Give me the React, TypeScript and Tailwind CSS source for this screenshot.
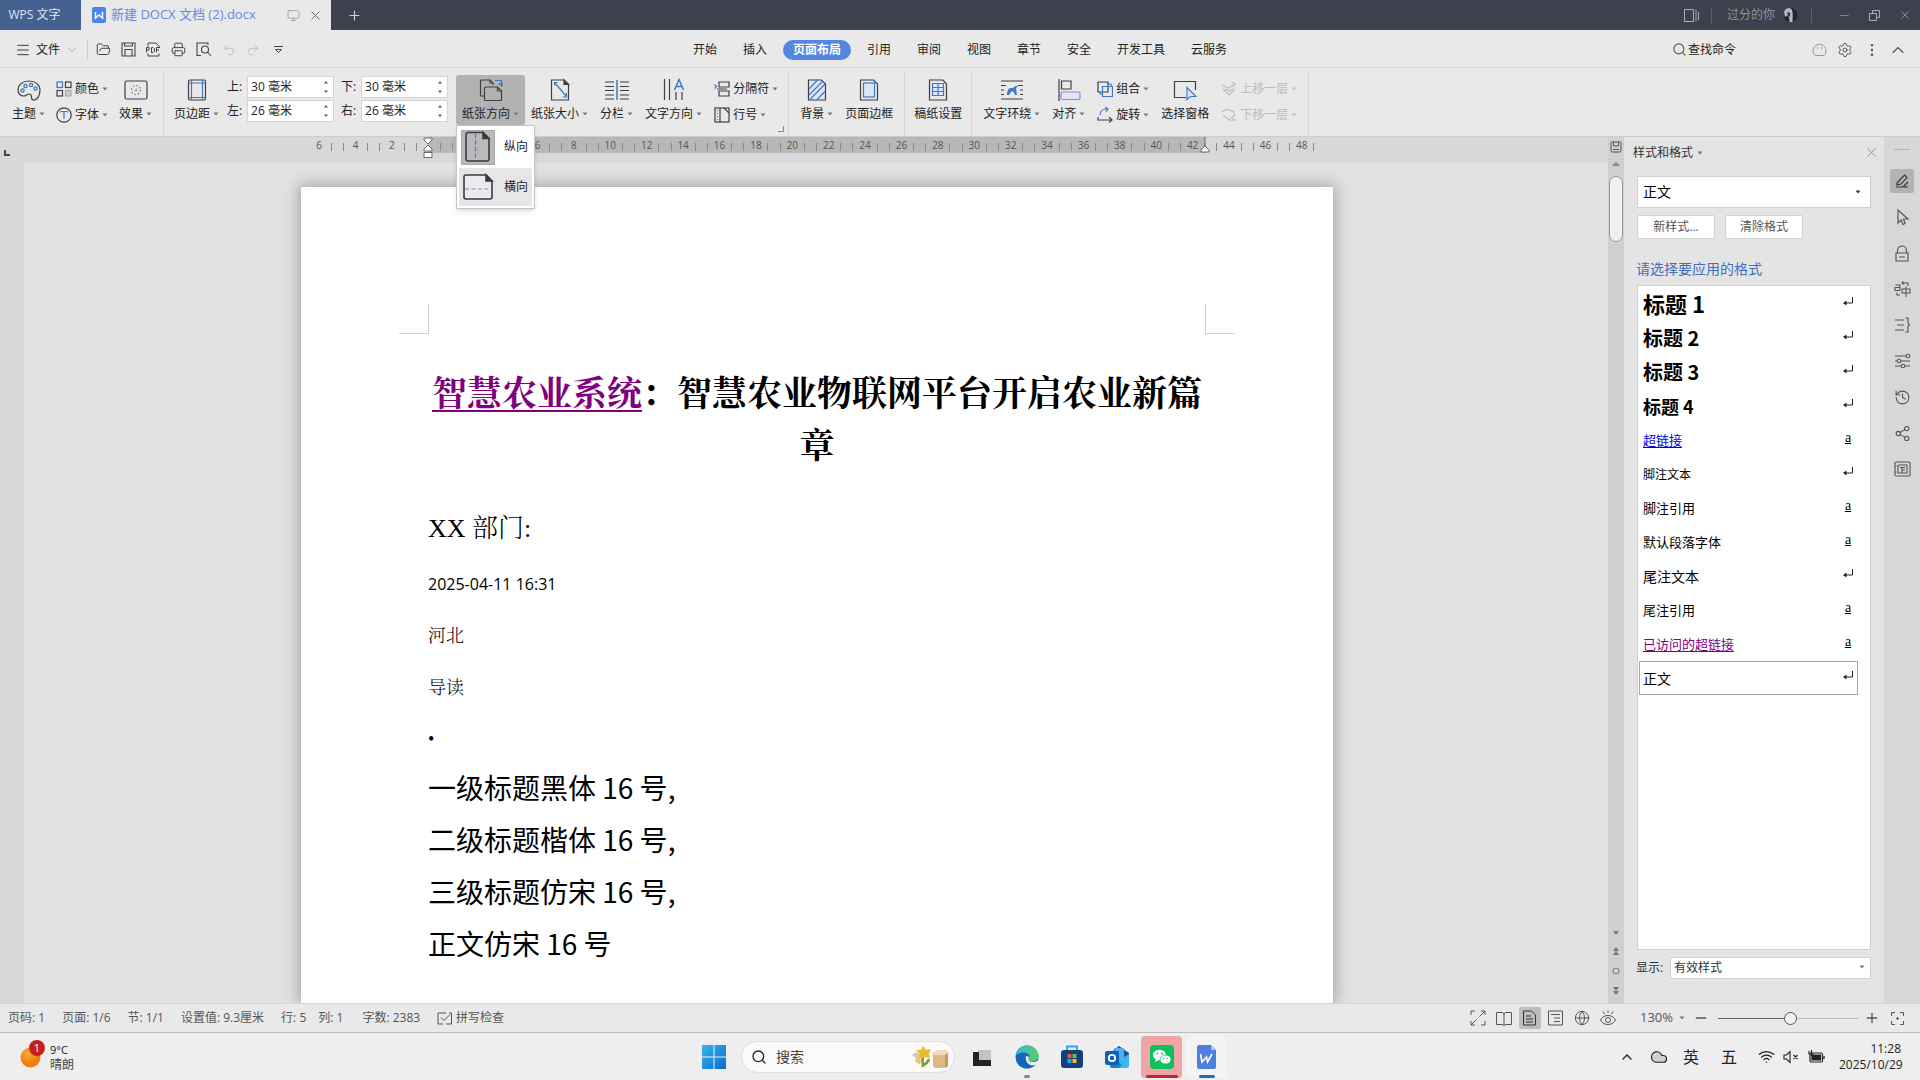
import React from "react";
import {
  FolderOpen, Printer, Undo2, Redo2, Search, Settings, EllipsisVertical,
  ChevronUp, ChevronDown, X, Minus, Plus, Menu, History, Share2,
  Globe, Wifi, Cloud, Monitor,
} from "lucide-react";

const UI = "font-['Open_Sans','Noto_Sans_CJK_SC',sans-serif]";
const SONG = "font-['Liberation_Serif','Noto_Serif_CJK_SC','Noto_Sans_CJK_SC',serif]";

type Kids = { children: React.ReactNode };

function Caret({ className = "text-[#777]" }: { className?: string }) {
  return (
    <svg width="6" height="4" viewBox="0 0 6 4" className={`shrink-0 ${className}`} aria-hidden="true">
      <path d="M0.5 0.5h5L3 3.5z" fill="currentColor" />
    </svg>
  );
}

function Svg({ size = 24, children }: Kids & { size?: number }) {
  return (
    <svg width={size} height={size} viewBox={`0 0 ${size} ${size}`} fill="none" stroke="#3f3f46" strokeWidth="1.2" className="shrink-0" aria-hidden="true">
      {children}
    </svg>
  );
}

const BLUE = "#3f78c4";

const PaletteIcon = () => (
  <Svg>
    <path d="M12 3C5.500 3 1 7 1 12c0 4 3 6 5.500 6 3 0 3-2 5.500-2 2 0 2.500 1.500 2.500 3 0 1.500 0 3 2 3 4 0 6.500-5 6.500-10C23 7 18.500 3 12 3z" />
    <g stroke={BLUE} strokeWidth="1.300"><circle cx="5.500" cy="12.500" r="1.600" /><circle cx="8.500" cy="8" r="1.600" /><circle cx="14" cy="7" r="1.600" /><circle cx="18.500" cy="10.500" r="1.600" /></g>
  </Svg>
);
const ColorsIcon = () => (
  <Svg size={16}>
    <rect x="1" y="1" width="5.500" height="5.500" stroke={BLUE} /><rect x="9.500" y="1" width="5.500" height="5.500" />
    <rect x="1" y="9.500" width="5.500" height="5.500" /><rect x="9.500" y="9.500" width="5.500" height="5.500" stroke="#aaa" fill="#ccc" />
  </Svg>
);
const FontIcon = () => (
  <Svg size={16}><circle cx="8" cy="8" r="7.200" /><path d="M4.500 5.500V4.500h7v1M8 4.500V12" stroke={BLUE} /></Svg>
);
const EffectIcon = () => (
  <Svg><rect x="1" y="3" width="22" height="18" rx="1.500" /><circle cx="12" cy="12" r="4.500" stroke="#777" strokeDasharray="1.500 2" /><circle cx="12" cy="12" r="1" stroke="#777" strokeDasharray="1 1" /></Svg>
);
const MarginIcon = () => (
  <Svg><rect x="3.500" y="2" width="17" height="20" rx="1.500" /><path d="M6.500 2v20M17.500 2v20M3.500 5h17M3.500 19.500h17" stroke={BLUE} /></Svg>
);
const OrientIcon = () => (
  <Svg>
    <path d="M5 18H2.500a1 1 0 0 1-1-1V3a1 1 0 0 1 1-1H11l3 3v2" /><path d="M11 2v3h3" />
    <path d="M6.500 9h12l4 4v8.500a1 1 0 0 1-1 1h-15a1 1 0 0 1-1-1V10a1 1 0 0 1 1-1z" /><path d="M18.500 9v4h4" />
    <path d="M16 2.500h6.500V8M20 5l2.500 3 1-3" stroke={BLUE} />
  </Svg>
);
const SizeIcon = () => (
  <Svg><path d="M4 2h12l4.500 4.500V22H3.500V2z" /><path d="M16 2v4.500h4.500z" fill="#3f3f46" /><path d="M6.500 7.500v-3h3M6.500 4.500l12 14M18.500 15v4h-4" stroke={BLUE} /></Svg>
);
const ColumnsIcon = () => (
  <Svg><path d="M0 4h9M0 8.500h9M0 12.500h9M0 17h9M0 21h9M15 4h9M15 8.500h9M15 12.500h9M15 17h9M15 21h9" /><path d="M12 2v20" stroke={BLUE} strokeWidth="1.500" /></Svg>
);
const TextDirIcon = () => (
  <Svg><path d="M2.500 1v21M7.500 1v21M14 14v8M20 14v8" /><path d="M12.500 12L17 1.500 21.500 12M14 8.500h6" stroke={BLUE} strokeWidth="1.500" /></Svg>
);
const BreakIcon = () => (
  <Svg size={16}><path d="M5 1h10v5H5zM15 10H5v5h10zM3 8h10" /><path d="M0.500 3.500L2.500 5.500 0.500 7.500" stroke={BLUE} /></Svg>
);
const LineNoIcon = () => (
  <Svg size={16}><rect x="1" y="1" width="14" height="14" /><path d="M6 1v14M10 1l5 5" /><path d="M3.500 3v1M3.500 6v1M3.500 9v1M3.500 12v1" stroke={BLUE} /></Svg>
);
const BgIcon = () => (
  <Svg><path d="M4 2h12.500L20.500 6v16H3.500V2z" fill="#dbe8f7" /><path d="M4 11l8.500-9M4 17L18 3M5 21.500L20 6M12 21.500l8-8" stroke={BLUE} /></Svg>
);
const BorderIcon = () => (
  <Svg><path d="M4 2h12.500L20.500 6v16H3.500V2z" /><rect x="6.500" y="5" width="11" height="14" stroke={BLUE} fill="#dbe8f7" /></Svg>
);
const GridPaperIcon = () => (
  <Svg><path d="M4 2h13l3.500 4v16H3.500V2z" /><path d="M6.500 5.500h11v12h-11zM6.500 9.500h11M6.500 13.500h11M12 5.500v12" stroke={BLUE} fill="#dbe8f7" /></Svg>
);
const WrapIcon = () => (
  <Svg><path d="M1 3h22M1 21h22M1 7.500h5M18 7.500h5M1 12h3M20 12h3M1 16.500h3M20 16.500h3" /><path d="M7 17c0-4 1-6 3-7h3c1-1 3-3 5-2l-2 2 1 7h-2l-2-4-2 1-2 3z" fill={BLUE} stroke="none" /></Svg>
);
const AlignIcon = () => (
  <Svg><path d="M2 1v22M4.500 3H14v8H4.500z" /><rect x="4" y="14" width="19" height="7.500" rx="1.500" stroke="#8f86d8" fill="#dfe8f8" /></Svg>
);
const GroupIcon = () => (
  <Svg size={16}><path d="M1 1h10v10H1z" /><path d="M5.500 5.500h10v10h-10z" stroke={BLUE} /><path d="M11 3h3v3M5 13H3v-2" stroke={BLUE} /></Svg>
);
const RotateIcon = () => (
  <Svg size={16}><path d="M1 10v3h14M12 10l3 3-3 2.500" /><path d="M3 8c0-4 3-6 7-6M8 0l3 2-2 3" stroke={BLUE} /></Svg>
);
const PaneIcon = () => (
  <Svg><path d="M13 19.500H1.500v-16h21V12" /><path d="M14 9.500v12l3.500-3H23z" stroke={BLUE} fill="#dbe8f7" /></Svg>
);
const LayerIcon = ({ down = false }: { down?: boolean }) => (
  <svg width="16" height="16" viewBox="0 0 16 16" fill="none" stroke="#bdbdbd" strokeWidth="1.200" className="shrink-0" aria-hidden="true">
    {down ? <path d="M1 5l5-3 7 3v3M2 8l6 5 6-5M10 14l3-2 2 2" /> : <path d="M1 4l6 3 5-3M2 8l6 6 6-6M11 1l3 2-2 3M4 8l4 2 4-2" />}
  </svg>
);

function Big({ icon, label, caret = true }: { icon: React.ReactNode; label: string; caret?: boolean }) {
  return (
    <button className="flex flex-col items-center gap-1 text-xs leading-4 whitespace-nowrap">
      {icon}
      <span className="flex items-center gap-[3px]">{label}{caret && <Caret />}</span>
    </button>
  );
}
function Small({ icon, label, disabled = false }: { icon: React.ReactNode; label: string; disabled?: boolean }) {
  return (
    <button disabled={disabled} className="flex h-[22px] items-center gap-[3px] text-xs whitespace-nowrap disabled:text-[#bcbcbc]">
      {icon}{label}<Caret className={disabled ? "text-[#c4c4c4]" : "text-[#777]"} />
    </button>
  );
}
function Pair({ children }: Kids) {
  return <div className="flex flex-col gap-1">{children}</div>;
}
function Group({ children, pad = "px-[11px]" }: Kids & { pad?: string }) {
  return <div className={`relative flex items-start gap-3 border-r border-[#d9d9d9] pt-1.5 ${pad}`}>{children}</div>;
}
function Spin({ id, label, value }: { id: string; label: string; value: string }) {
  return (
    <div className="flex h-[22px] items-center gap-1 text-xs">
      <label htmlFor={id} className="w-4 whitespace-nowrap">{label}:</label>
      <span className="flex h-full w-[87px] items-center border border-[#d4d4d4] bg-white pr-1">
        <input id={id} defaultValue={value} className="w-full min-w-0 bg-transparent pl-[3px] outline-none" />
        <svg width="6" height="14" viewBox="0 0 6 14" fill="#555" className="shrink-0" aria-hidden="true"><path d="M1 3.500h4L3 1zM1 10.500h4L3 13z" /></svg>
      </span>
    </div>
  );
}

function TitleBar() {
  return (
    <header className="flex h-[30px] shrink-0 items-stretch bg-[#3d404d] text-[#a9adb8]">
      <button className="w-[81px] bg-[#45618f] pr-3 text-xs text-[#dfe6f2]">WPS 文字</button>
      <div className="flex w-[250px] items-center bg-[#e9e9e9] pr-2 pl-[11px]">
        <svg width="14" height="16" viewBox="0 0 14 16" aria-hidden="true"><rect width="14" height="16" rx="2" fill="#4a86ee" /><path d="M3.500 5v6l3.500-3 3.500 3V5" stroke="#fff" strokeWidth="1.500" fill="none" /></svg>
        <span className="ml-[5px] flex-1 text-[13px] text-[#5f8ce0]">新建 DOCX 文档 (2).docx</span>
        <Monitor size={13} strokeWidth={1.200} className="text-[#888]" />
        <button aria-label="关闭标签" className="ml-2 text-[#666]"><X size={15} strokeWidth={1.400} /></button>
      </div>
      <button aria-label="新建标签" className="px-4 text-[#d0d2d8]"><Plus size={15} strokeWidth={1.800} /></button>
      <div className="ml-auto flex items-center pr-2 text-xs">
        <svg width="15" height="13" viewBox="0 0 15 13" fill="none" stroke="currentColor" aria-hidden="true"><path d="M.5.5h9v12h-9zM12 .5v12M14.500 3v8" /></svg>
        <span className="ml-3 h-4 w-px bg-[#5c5f6b]" />
        <button className="ml-[15px] text-[#8f939f]">过分的你</button>
        <svg width="15" height="16" viewBox="0 0 15 16" className="ml-2" aria-hidden="true"><circle cx="7.500" cy="8" r="7" fill="#23252e" /><path d="M1 5c1-3 3-4 5-4 4 0 4 5 3.500 14H6.500c0-4-1-5-1.500-7L2 10z" fill="#b4b8c0" /><path d="M4 5l3 1v4L5 8z" fill="#23252e" /></svg>
        <span className="ml-[13px] h-4 w-px bg-[#5c5f6b]" />
        <button aria-label="最小化" className="ml-[26px]"><Minus size={13} strokeWidth={1.200} /></button>
        <button aria-label="还原" className="ml-[18px]"><svg width="11" height="11" viewBox="0 0 11 11" fill="none" stroke="currentColor" aria-hidden="true"><path d="M.5 3.500h7v7h-7zM3.500 3.500v-3h7v7h-3" /></svg></button>
        <button aria-label="关闭" className="ml-[18px]"><X size={14} strokeWidth={1.200} /></button>
      </div>
    </header>
  );
}

const TABS = ["开始", "插入", "页面布局", "引用", "审阅", "视图", "章节", "安全", "开发工具", "云服务"];

function MenuRow() {
  return (
    <div className="grid h-[38px] shrink-0 grid-cols-[1fr_auto_1fr] items-center border-b border-[#dcdcdc] bg-[#e9e9e9] pt-0.5 text-xs">
      <div className="flex items-center pl-[15px] text-[#444]">
        <button className="flex items-center gap-[5px] text-[#222]"><Menu size={16} strokeWidth={1.300} />文件<ChevronDown size={14} strokeWidth={1.200} className="text-[#999]" /></button>
        <span className="mx-2 h-5 w-px bg-[#cfcfcf]" />
        <div className="flex items-center gap-[10px] [&_svg]:block">
          <button aria-label="打开"><FolderOpen size={15} strokeWidth={1.600} /></button>
          <button aria-label="保存">
            <svg width="15" height="15" viewBox="0 0 15 15" fill="none" stroke="currentColor" strokeWidth="1.100" aria-hidden="true"><path d="M1 1h13v13H1zM3.500 1v3h8V1M4 14V7.500h7V14" /></svg>
          </button>
          <button aria-label="输出为PDF">
            <svg width="15" height="15" viewBox="0 0 15 15" fill="none" stroke="currentColor" aria-hidden="true"><path d="M2 4.500V1h8l3 3v1M2 11.500V14h11v-2.500M.5 5.500v5M.5 5.500h2.500v2.500H.5M5.500 5.500v5h1.500l1.500-1.500v-2L7 5.500zM10.500 10.500v-5H14M10.500 8H13" /></svg>
          </button>
          <button aria-label="打印"><Printer size={15} strokeWidth={1.600} /></button>
          <button aria-label="打印预览">
            <svg width="16" height="15" viewBox="0 0 16 15" fill="none" stroke="currentColor" strokeWidth="1.100" aria-hidden="true"><path d="M5 13.500H1V1h11v2" /><circle cx="9" cy="7.500" r="3.500" /><path d="M11.500 10l3.500 4" /></svg>
          </button>
          <button aria-label="撤销" className="text-[#bbb]"><Undo2 size={14} strokeWidth={1.600} /></button>
          <button aria-label="恢复" className="text-[#bbb]"><Redo2 size={14} strokeWidth={1.600} /></button>
          <button aria-label="自定义" className="pl-1"><svg width="9" height="9" viewBox="0 0 9 9" fill="none" stroke="currentColor" aria-hidden="true"><path d="M0 1.500h9M1.500 4.500l3 3 3-3z" /></svg></button>
        </div>
      </div>
      <nav className="flex gap-1.5 text-[#222]">
        {TABS.map((t) =>
          t === "页面布局" ? (
            <button key={t} className="h-5 rounded-full bg-[#5387e0] px-[10px] font-bold text-white">{t}</button>
          ) : (
            <button key={t} className="h-5 px-[10px]">{t}</button>
          )
        )}
      </nav>
      <div className="flex items-center pr-3 text-[#555]">
        <button className="mr-[76px] ml-auto flex items-center gap-px text-[#222]"><Search size={15} strokeWidth={1.800} className="text-[#555]" />查找命令</button>
        <button aria-label="反馈" className="text-[#999]"><svg width="15" height="15" viewBox="0 0 15 15" fill="none" stroke="currentColor" aria-hidden="true"><path d="M3 13.500a6.500 6.500 0 1 1 9 0zM5.500 5v2M9.500 5v2" /></svg></button>
        <button aria-label="设置" className="ml-[10px]"><Settings size={16} strokeWidth={1.500} /></button>
        <button aria-label="更多" className="ml-[11px]"><EllipsisVertical size={16} strokeWidth={1.800} /></button>
        <button aria-label="收起功能区" className="ml-2"><ChevronUp size={20} strokeWidth={1.400} /></button>
      </div>
    </div>
  );
}

function OrientationMenu() {
  return (
    <div role="menu" className="absolute top-full left-0 z-20 flex w-[79px] flex-col gap-0.5 border border-[#c4c4c4] bg-white p-0.5 text-xs shadow-md">
      <button role="menuitem" className="flex h-[38px] items-center gap-[9px] pl-0.5">
        <span className="flex h-[35px] w-[34px] items-center justify-center border border-[#a9a9a9] bg-[#b9b9bb]">
          <svg width="28" height="32" viewBox="0 0 28 32" fill="none" stroke="#3a3a3f" strokeWidth="1.600" aria-hidden="true"><path d="M4 1.500h15l6 6V28a2 2 0 0 1-2 2H4a2 2 0 0 1-2-2V3.500a2 2 0 0 1 2-2z" /><path d="M19 1.500v6h6z" fill="#3a3a3f" /><path d="M11.500 3v26" stroke="#5b6fc0" strokeWidth="1.200" strokeDasharray="4 2.500" /></svg>
        </span>
        纵向
      </button>
      <button role="menuitem" className="flex h-[38px] items-center gap-[9px] bg-[#e6e6e8] pl-0.5">
        <span className="flex h-[35px] w-[34px] items-center justify-center">
          <svg width="32" height="28" viewBox="0 0 32 28" fill="none" stroke="#3a3a3f" strokeWidth="1.600" aria-hidden="true"><path d="M4 2h20l6 6v16a2 2 0 0 1-2 2H4a2 2 0 0 1-2-2V4a2 2 0 0 1 2-2z" fill="#eaeaf0" /><path d="M24 2v6h6z" fill="#3a3a3f" /><path d="M3 16h26" stroke="#8a8ea8" strokeWidth="1.200" strokeDasharray="4 2.500" /></svg>
        </span>
        横向
      </button>
    </div>
  );
}

function Ribbon() {
  return (
    <div className="flex h-[69px] shrink-0 items-stretch border-b border-[#cdcdcd] bg-[#e9e9e9] pt-1 text-[#222]">
      <div className="relative flex items-start gap-[11px] border-r border-[#d9d9d9] pt-1.5 pr-[11px] pl-3">
        <Big icon={<PaletteIcon />} label="主题" />
        <Pair><Small icon={<ColorsIcon />} label="颜色" /><Small icon={<FontIcon />} label="字体" /></Pair>
        <Big icon={<EffectIcon />} label="效果" />
      </div>
      <Group pad="pl-[10px] pr-[10px]">
        <Big icon={<MarginIcon />} label="页边距" />
        <div className="-mt-0.5 -ml-1 grid grid-cols-2 gap-x-[7px] gap-y-0.5">
          <Spin id="m-top" label="上" value="30 毫米" /><Spin id="m-bottom" label="下" value="30 毫米" />
          <Spin id="m-left" label="左" value="26 毫米" /><Spin id="m-right" label="右" value="26 毫米" />
        </div>
        <div className="relative -my-[3px] -mr-1.5 -ml-1 rounded-[3px] bg-[#b2b2b2] px-1.5 py-[3px]">
          <Big icon={<OrientIcon />} label="纸张方向" />
          <OrientationMenu />
        </div>
        <Big icon={<SizeIcon />} label="纸张大小" />
        <Big icon={<ColumnsIcon />} label="分栏" />
        <Big icon={<TextDirIcon />} label="文字方向" />
        <Pair><Small icon={<BreakIcon />} label="分隔符" /><Small icon={<LineNoIcon />} label="行号" /></Pair>
        <button aria-label="页面设置" className="absolute right-1 bottom-1"><svg width="6" height="6" viewBox="0 0 6 6" fill="none" stroke="#888" aria-hidden="true"><path d="M5.500 0v5.500H0" /></svg></button>
      </Group>
      <Group><Big icon={<BgIcon />} label="背景" /><Big icon={<BorderIcon />} label="页面边框" caret={false} /></Group>
      <Group pad="px-[9px]"><Big icon={<GridPaperIcon />} label="稿纸设置" caret={false} /></Group>
      <Group>
        <Big icon={<WrapIcon />} label="文字环绕" />
        <Big icon={<AlignIcon />} label="对齐" />
        <Pair><Small icon={<GroupIcon />} label="组合" /><Small icon={<RotateIcon />} label="旋转" /></Pair>
        <Big icon={<PaneIcon />} label="选择窗格" caret={false} />
        <Pair><Small disabled icon={<LayerIcon />} label="上移一层" /><Small disabled icon={<LayerIcon down />} label="下移一层" /></Pair>
      </Group>
    </div>
  );
}

const RULER = Array.from({ length: 28 }, (_, i) => i * 2 - 6);

function Ruler() {
  return (
    <div className="flex h-[25px] shrink-0 bg-[#d8d8d8]">
      <div className="w-6 pt-[13px] pl-1"><svg width="6" height="6" viewBox="0 0 6 6" fill="none" stroke="#444" strokeWidth="2" aria-hidden="true"><path d="M1 0v5h5" /></svg></div>
      <div className="flex flex-1 justify-center pl-0.5">
        <div className="relative w-[1032px]">
          <div className="absolute top-0 left-[127px] h-4 w-[777px] bg-[#b8b8b8]" />
          <div className="relative grid w-[1019px] grid-cols-[repeat(28,minmax(0,1fr))] text-[10px] leading-4 text-[#555]">
            {RULER.map((n) => (
              <div key={n} className="flex h-4 items-center justify-evenly">
                <span className={n === -6 ? "w-px" : "mt-1 h-2 w-px bg-[#8b8b8b]"} />
                <span className="w-3 text-center">{n === 0 ? "" : Math.abs(n)}</span>
                <span className="mt-1 h-2 w-px bg-[#8b8b8b]" />
              </div>
            ))}
          </div>
          <svg width="10" height="22" viewBox="0 0 10 22" fill="#fff" stroke="#666" className="absolute top-0 left-[122px]" aria-hidden="true"><path d="M1 1h8v2L5 7 1 3zM5 8l4 4v2H1v-2zM1 15.500h8v5H1z" /></svg>
          <svg width="10" height="18" viewBox="0 0 10 18" fill="#fff" stroke="#666" className="absolute top-0 left-[899px]" aria-hidden="true"><path d="M5 0v10M5 9l4 4v2H1v-2z" /></svg>
        </div>
      </div>
    </div>
  );
}

function Document() {
  return (
    <article className={`h-full w-[1032px] shrink-0 overflow-hidden bg-white pt-[117px] text-black shadow-[0_0_14px_2px_rgba(0,0,0,0.28)] ${SONG}`}>
      <div className="flex justify-between px-[98px]">
        <span className="size-[30px] border-r border-b border-[#d0d0d0]" />
        <span className="size-[30px] border-b border-l border-[#d0d0d0]" />
      </div>
      <div className="px-[127px]">
        <h1 className="mt-[31px] text-center text-[35px] leading-[52px] font-bold font-['Noto_Serif_CJK_SC','Noto_Sans_CJK_SC',serif]">
          <a href="#system" className="text-[#800080] underline decoration-2 underline-offset-4">智慧农业系统</a>：智慧农业物联网平台开启农业新篇章
        </h1>
        <p className="mt-[34px] text-[26px] leading-[52px] font-light">XX 部门:</p>
        <p className="mt-[3px] text-base leading-[52px] font-['Open_Sans',sans-serif]">2025-04-11 16:31</p>
        <p className="text-[18px] leading-[52px] font-light">河北</p>
        <p className="text-[18px] leading-[52px] font-light">导读</p>
        <p className="h-[47px] text-[18px] leading-[50px]">•</p>
        <div className="text-[28px] leading-[52px] font-['Noto_Sans_CJK_SC',sans-serif]">
          <p>一级标题黑体 16 号,</p>
          <p>二级标题楷体 16 号,</p>
          <p>三级标题仿宋 16 号,</p>
          <p>正文仿宋 16 号</p>
        </div>
      </div>
    </article>
  );
}

function ScrollBar() {
  return (
    <div className="flex w-4 flex-col items-center bg-[#d0d0d0] pt-1">
      <svg width="12" height="12" viewBox="0 0 12 12" fill="none" stroke="#555" aria-hidden="true"><rect x="1" y="1" width="10" height="10" rx="1" /><path d="M3.500 1v4h5V1M3 8.500h6" /></svg>
      <svg width="8" height="5" viewBox="0 0 8 5" fill="#888" className="mt-2" aria-hidden="true"><path d="M0 5h8L4 1z" /></svg>
      <span className="mt-[10px] h-[66px] w-3.5 rounded-full border border-[#999] bg-[#f0f0f0]" />
      <div className="mt-auto flex flex-col items-center gap-3 pb-2">
        <svg width="6" height="4" viewBox="0 0 6 4" fill="#777" aria-hidden="true"><path d="M0 0h6L3 4z" /></svg>
        <svg width="6" height="8" viewBox="0 0 6 8" fill="#777" aria-hidden="true"><path d="M0 4h6L3 0zM0 8h6L3 4z" /></svg>
        <svg width="8" height="8" viewBox="0 0 8 8" fill="none" stroke="#777" aria-hidden="true"><circle cx="4" cy="4" r="3" /></svg>
        <svg width="6" height="8" viewBox="0 0 6 8" fill="#777" aria-hidden="true"><path d="M0 0h6L3 4zM0 4h6L3 8z" /></svg>
      </div>
    </div>
  );
}

const STYLES: { name: string; cls: string; para: boolean }[] = [
  { name: "标题 1", cls: "text-[22px] font-bold", para: true },
  { name: "标题 2", cls: "text-[20px] font-bold", para: true },
  { name: "标题 3", cls: "text-[20px] font-bold", para: true },
  { name: "标题 4", cls: "text-[18px] font-bold", para: true },
  { name: "超链接", cls: "text-[13px] text-[#0000e0] underline underline-offset-2", para: false },
  { name: "脚注文本", cls: "text-xs", para: true },
  { name: "脚注引用", cls: "text-[13px]", para: false },
  { name: "默认段落字体", cls: "text-[13px]", para: false },
  { name: "尾注文本", cls: "text-sm", para: true },
  { name: "尾注引用", cls: "text-[13px]", para: false },
  { name: "已访问的超链接", cls: "text-[13px] text-[#800080] underline underline-offset-2", para: false },
  { name: "正文", cls: "text-sm", para: true },
];

function StylePanel() {
  return (
    <aside className="flex w-[260px] flex-col bg-[#e4e4e4] px-[13px] pb-6 text-xs text-[#333]">
      <div className="-ml-1 flex h-[31px] items-center">
        <h2 className="flex items-center gap-1">样式和格式<Caret /></h2>
        <button aria-label="关闭窗格" className="-mr-2 ml-auto text-[#888]"><X size={15} strokeWidth={1.400} /></button>
      </div>
      <div className="relative mt-2">
        <select aria-label="当前样式" className="h-8 w-full appearance-none border border-[#d0d0d0] bg-white pl-[5px] text-sm text-black"><option>正文</option></select>
        <span className="pointer-events-none absolute top-3 right-2.5 flex h-2 items-center"><Caret className="text-[#333]" /></span>
      </div>
      <div className="mt-[7px] flex gap-[10px]">
        <button className="h-6 w-[78px] rounded-xs border border-[#d0d0d0] bg-white text-[#555]">新样式...</button>
        <button className="h-6 w-[78px] rounded-xs border border-[#d0d0d0] bg-white text-[#555]">清除格式</button>
      </div>
      <h3 className="mt-5 -ml-px text-sm leading-5 text-[#3f6fbf]">请选择要应用的格式</h3>
      <ul className="mt-1.5 flex-1 border border-[#d0d0d0] bg-white pt-px pr-3 pl-px text-black">
        {STYLES.map((s) => (
          <li key={s.name}>
            <button className={`flex h-[34px] w-full items-center justify-between border pr-1 pl-[3px] font-['Noto_Sans_CJK_SC',sans-serif] ${s.name === "正文" ? "border-[#a6a6b0]" : "border-transparent"}`}>
              <span className={s.cls}>{s.name}</span>
              {s.para ? (
                <svg width="10" height="9" viewBox="0 0 10 9" fill="none" stroke="#222" className="mb-1.5" aria-hidden="true"><path d="M9.500 0v6H2" /><path d="M0 6l3.500-2.500v5z" fill="#222" stroke="none" /></svg>
              ) : (
                <span className="mb-1 w-2.5 text-center text-sm leading-4 underline font-['Liberation_Serif',serif]">a</span>
              )}
            </button>
          </li>
        ))}
      </ul>
      <div className="mt-[7px] flex items-center gap-1">
        <label htmlFor="show" className="-ml-px w-[30px] whitespace-nowrap">显示:</label>
        <div className="relative flex-1">
          <select id="show" className="h-[22px] w-full appearance-none border border-[#d0d0d0] bg-white pl-[3px] text-xs"><option>有效样式</option></select>
          <span className="pointer-events-none absolute top-1.5 right-1.5 flex h-2 items-center"><Caret /></span>
        </div>
      </div>
    </aside>
  );
}

function SideBar() {
  return (
    <div className="flex w-9 flex-col items-center bg-[#d7d7d7] pt-3 text-[#555]">
      <span className="h-px w-4 bg-[#b5b5b5]" />
      <div className="mt-[19px] flex flex-col gap-3 *:flex *:size-6 *:items-center *:justify-center *:rounded-xs">
        <button aria-label="样式" className="bg-[#b3b3b3] text-[#333]"><svg width="16" height="16" viewBox="0 0 16 16" fill="none" stroke="currentColor" strokeWidth="1.100" aria-hidden="true"><path d="M3 10l7.500-8L13 4.500 7 11l-4 1zM2 14h7M9 14l5-5M10 14h4" /></svg></button>
        <button aria-label="选择"><svg width="13" height="17" viewBox="0 0 13 17" fill="none" stroke="currentColor" strokeWidth="1.200" aria-hidden="true"><path d="M2 1v13l3-3 2 4.500 2-1L7.500 10H12z" /></svg></button>
        <button aria-label="限制编辑"><svg width="14" height="17" viewBox="0 0 14 17" fill="none" stroke="currentColor" strokeWidth="1.200" aria-hidden="true"><path d="M2.500 8V5.500a4.500 4.500 0 0 1 9 0V8M1 8h12v8H1zM4 12h6" /></svg></button>
        <button aria-label="翻译"><svg width="17" height="17" viewBox="0 0 17 17" fill="none" stroke="currentColor" strokeWidth="1.100" aria-hidden="true"><path d="M1.500 4H6v5.500M6 6.500H1v3h5M8 8h8v4H8zM12 5.500V16M8 2h6v3M9.500 .5L8 2l1.500 1.500M3 11.500v2.500h3" /></svg></button>
        <button aria-label="目录"><svg width="16" height="16" viewBox="0 0 16 16" fill="none" stroke="currentColor" strokeWidth="1.100" aria-hidden="true"><path d="M1 3h9M3 8h7M1 13h9M11.500 1H14v5.500L15.500 8 14 9.500V15h-2.500" /></svg></button>
        <button aria-label="属性"><svg width="17" height="16" viewBox="0 0 17 16" fill="none" stroke="currentColor" strokeWidth="1.100" aria-hidden="true"><path d="M1 3h11M1 8h2M7 8h9M1 13h6M11 13h5" /><circle cx="14" cy="3" r="1.800" /><circle cx="5" cy="8" r="1.800" /><circle cx="9" cy="13" r="1.800" /></svg></button>
        <button aria-label="历史版本"><History size={17} strokeWidth={1.500} /></button>
        <button aria-label="分享"><Share2 size={17} strokeWidth={1.500} /></button>
        <button aria-label="稻壳"><svg width="17" height="16" viewBox="0 0 17 16" fill="none" stroke="currentColor" strokeWidth="1.100" aria-hidden="true"><rect x="1" y="1" width="15" height="14" rx="1" /><path d="M4 4h9v8H8M4 4v8h4M6 6.500h5M8 9h3M8 11.500V6.500M1 5h1.500M1 11h1.500" /></svg></button>
      </div>
    </div>
  );
}

function StatusBar() {
  return (
    <footer className="flex h-[29px] shrink-0 items-center border-t border-[#d5d5d5] bg-[#e9e9e9] pr-4 pl-2 text-xs text-[#555]">
      <div className="flex items-center gap-[17px] whitespace-nowrap">
        <span>页码: 1</span><span>页面: 1/6</span><span>节: 1/1</span><span>设置值: 9.3厘米</span>
        <span className="flex gap-3"><span>行: 5</span><span>列: 1</span></span>
        <span className="ml-0.5">字数: 2383</span>
        <button className="flex items-center gap-1"><svg width="15" height="13" viewBox="0 0 15 13" fill="none" stroke="currentColor" aria-hidden="true"><path d="M9 1H1v11h5M12 1h2.500v11H9M4 5.500l3 3 6-6" /></svg>拼写检查</button>
      </div>
      <div className="ml-auto flex items-center gap-1 *:flex *:size-[22px] *:items-center *:justify-center *:rounded-xs">
        <button aria-label="全屏"><svg width="16" height="16" viewBox="0 0 16 16" fill="none" stroke="currentColor" aria-hidden="true"><path d="M1 5V1h4M15 11v4h-4M1 11v4h4M11 1h4v4M9.500 6.500L15 1M6.500 9.500L1 15" /></svg></button>
        <button aria-label="阅读版式"><svg width="16" height="15" viewBox="0 0 16 15" fill="none" stroke="currentColor" aria-hidden="true"><path d="M.5 1.500H6l2 1 2-1h5.500v12H10l-2 1-2-1H.500zM8 2.500v12" /></svg></button>
        <button aria-label="页面视图" className="bg-[#bdbdbd] text-[#333]"><svg width="15" height="16" viewBox="0 0 15 16" fill="none" stroke="currentColor" aria-hidden="true"><path d="M1.500 1h8l4 4v10h-12zM4 6h5M4 9h7M4 12h7" /></svg></button>
        <button aria-label="大纲"><svg width="15" height="16" viewBox="0 0 15 16" fill="none" stroke="currentColor" aria-hidden="true"><path d="M.5 1h14v14H.500zM3 4.500h9M6 8h6M6 11.500h6" /></svg></button>
        <button aria-label="Web版式"><Globe size={16} strokeWidth={1.500} /></button>
        <button aria-label="护眼模式"><svg width="16" height="16" viewBox="0 0 16 16" fill="none" stroke="currentColor" aria-hidden="true"><path d="M.5 10c2-3.500 5-4.500 7.500-4.500s5.500 1 7.500 4.500c-2 3.500-5 4.500-7.500 4.500S2.500 13.500.5 10zM8 .5V3M3 1.500L4.500 4M13 1.500L11.500 4" /><circle cx="8" cy="10" r="2.500" /></svg></button>
      </div>
      <button className="ml-[21px] flex items-center gap-1.5 text-[13px]">130%<Caret /></button>
      <button aria-label="缩小" className="ml-2"><Minus size={16} strokeWidth={2} /></button>
      <input type="range" aria-label="缩放" min={0} max={100} defaultValue={52} className="mr-1.5 ml-[9px] h-[14px] w-[140px] appearance-none bg-transparent [&::-webkit-slider-runnable-track]:h-px [&::-webkit-slider-runnable-track]:bg-linear-to-r [&::-webkit-slider-runnable-track]:from-[#666] [&::-webkit-slider-runnable-track]:from-50% [&::-webkit-slider-runnable-track]:to-[#bbb] [&::-webkit-slider-runnable-track]:to-50% [&::-webkit-slider-thumb]:-mt-1.5 [&::-webkit-slider-thumb]:size-[13px] [&::-webkit-slider-thumb]:appearance-none [&::-webkit-slider-thumb]:rounded-full [&::-webkit-slider-thumb]:border [&::-webkit-slider-thumb]:border-[#555] [&::-webkit-slider-thumb]:bg-[#f2f2f2]" />
      <button aria-label="放大"><Plus size={16} strokeWidth={2} /></button>
      <button aria-label="适合窗口" className="ml-[11px]"><svg width="13" height="13" viewBox="0 0 13 13" fill="none" stroke="currentColor" aria-hidden="true"><path d="M.5 4V.5H4M9 .5h3.500V4M12.500 9v3.500H9M4 12.500H.500V9M6.500 5v3M5 6.500h3" /></svg></button>
    </footer>
  );
}

function TaskBar() {
  return (
    <div className="grid h-12 shrink-0 grid-cols-[1fr_auto_1fr] items-center border-t border-[#bdbdbd] bg-[#eeeeee] text-xs text-[#222]">
      <button className="flex items-center gap-1 pl-5 text-left">
        <svg width="26" height="30" viewBox="0 0 26 30" className="mb-1" aria-hidden="true">
          <defs><radialGradient id="sun" cx=".4" cy=".3"><stop offset="0" stopColor="#f9b233" /><stop offset="1" stopColor="#ee7d16" /></radialGradient></defs>
          <circle cx="10.500" cy="17.500" r="10" fill="url(#sun)" /><circle cx="17" cy="8" r="8" fill="#c42020" />
          <text x="17" y="12" fontSize="11" fill="#fff" textAnchor="middle" fontFamily="Open Sans">1</text>
        </svg>
        <span className="flex flex-col leading-[15px]"><span className="text-[11px]">9°C</span><span className="text-[#444]">晴朗</span></span>
      </button>
      <div className="flex items-center pl-[9px]">
        <button aria-label="开始菜单"><svg width="24" height="24" viewBox="0 0 24 24" aria-hidden="true"><defs><linearGradient id="win" x2="1" y2="1"><stop offset="0" stopColor="#38b5ee" /><stop offset="1" stopColor="#0a6cc9" /></linearGradient></defs><path d="M0 0h11.500v11.500H0zM12.500 0H24v11.500H12.500zM0 12.500h11.500V24H0zM12.500 12.500H24V24H12.500z" fill="url(#win)" /></svg></button>
        <label className="ml-[15px] flex h-8 w-[214px] items-center rounded-full border border-[#dedede] bg-[#fafafa] pr-[5px] pl-[9px]">
          <Search size={16} strokeWidth={2} className="shrink-0" />
          <input aria-label="搜索" placeholder="搜索" className="ml-[9px] w-full min-w-0 bg-transparent text-sm outline-none placeholder:text-[#444]" />
          <svg width="40" height="24" viewBox="0 0 40 24" className="shrink-0" aria-hidden="true">
            <path d="M3 10c3-4 8-3 9 1l-3 4z" fill="#cfcabb" /><path d="M14 22c-1-6-1-8 0-12M14 20c3-1 5-3 6-6" stroke="#7a9a2e" strokeWidth="2.500" fill="none" />
            <path d="M14 1l3 4 5-1-2 5 1 4-6-1-5 2 1-5-4-4 5 0z" fill="#edb92e" /><path d="M7 12l5 3-1 5-5-4z" fill="#e8c76a" />
            <path d="M24 8l5-3h8l2 3v13l-3 2H26l-2-2z" fill="#dfb884" /><path d="M24 8l5-3h8l2 3-3 2H26z" fill="#f1dcb8" /><path d="M36 10l3-2v13l-3 2z" fill="#c99a60" />
          </svg>
        </label>
        <div className="ml-1.5 flex items-center gap-1 *:relative *:flex *:h-[42px] *:w-[41px] *:items-center *:justify-center *:rounded">
          <button aria-label="任务视图"><svg width="18" height="18" viewBox="0 0 18 18" aria-hidden="true"><path d="M5 2h13v10H5z" fill="#c4c4c4" /><path d="M0 4h6v8h12v6H0z" fill="#222" /></svg></button>
          <button aria-label="Edge">
            <svg width="24" height="24" viewBox="0 0 24 24" aria-hidden="true"><defs><linearGradient id="e1" x1="0" y1=".3" x2="1" y2=".3"><stop offset="0" stopColor="#2fb4e6" /><stop offset="1" stopColor="#5fd05c" /></linearGradient></defs><circle cx="12" cy="12" r="11.500" fill="#1466b8" /><path d="M.7 11C1 5 6 .5 12 .5c6.500 0 11.500 5 11.500 10 0 4-3 6-6 6s-4-1-4-2 1.500-1.500 1-3.500C14 8.500 11 7 8 7.500 4.500 7.700 1.500 9 .7 11z" fill="url(#e1)" /><path d="M14.500 12c-2 1.500-1.500 5 3.500 5 2 0 3.500-.5 4.500-1.500l1.500 3-2.500 1c-6 3-12-2-10.500-8.500z" fill="#eee" /></svg>
            <span className="absolute bottom-0 h-[3px] w-1.5 rounded-full bg-[#8a8a8a]" />
          </button>
          <button aria-label="Microsoft Store"><svg width="24" height="24" viewBox="0 0 24 24" aria-hidden="true"><path d="M7 5V1.500h10V5" stroke="#2aa5e0" strokeWidth="1.800" fill="none" /><rect x="1" y="5" width="22" height="18" rx="3" fill="#123f80" /><path d="M7.500 9h4v4h-4z" fill="#f05a28" /><path d="M12.500 9h4v4h-4z" fill="#7fba2a" /><path d="M7.500 14h4v4h-4z" fill="#2aa5ee" /><path d="M12.500 14h4v4h-4z" fill="#fdbb20" /></svg></button>
          <button aria-label="Outlook"><svg width="24" height="24" viewBox="0 0 24 24" aria-hidden="true"><path d="M5 8l9-7 10 7v13H5z" fill="#1a4f9c" /><path d="M9 3h10v10l-5 3-5-3z" fill="#4fb0ee" /><path d="M5 21l19-12v12a2 2 0 0 1-2 2H7z" fill="#3cb4f0" /><path d="M5 12l12 8-3 3H7a2 2 0 0 1-2-2z" fill="#1e7fd0" /><rect y="6" width="14" height="14" rx="2" fill="#0d5fb8" /><circle cx="7" cy="13" r="3.200" fill="none" stroke="#fff" strokeWidth="1.800" /></svg></button>
          <button aria-label="微信" className="bg-[#efa5a5]">
            <svg width="24" height="24" viewBox="0 0 24 24" aria-hidden="true"><rect width="24" height="24" rx="4" fill="#0ac160" /><ellipse cx="9.500" cy="10" rx="6.500" ry="5.300" fill="#fff" /><path d="M5 17l1-4 3 2z" fill="#fff" /><ellipse cx="15.500" cy="14.500" rx="5.500" ry="4.500" fill="#fff" stroke="#0ac160" strokeWidth=".8" /><g fill="#0ac160"><circle cx="7.500" cy="8.500" r=".9" /><circle cx="12" cy="8.500" r=".9" /><circle cx="13.800" cy="13.500" r=".7" /><circle cx="17.200" cy="13.500" r=".7" /></g></svg>
            <span className="absolute bottom-0 h-[3px] w-8 rounded-full bg-[#b92a2a]" />
          </button>
          <button aria-label="WPS 文字" className="bg-[#f3f3f4]">
            <svg width="19" height="24" viewBox="0 0 19 24" aria-hidden="true"><path d="M2 0h12l5 5v17a2 2 0 0 1-2 2H2a2 2 0 0 1-2-2V2a2 2 0 0 1 2-2z" fill="#4d7fe0" /><path d="M14 0v5h5z" fill="#a9c4f5" /><path d="M3.500 9l1.500 8 4.500-5 1 5 4.500-8" stroke="#fff" strokeWidth="1.600" fill="none" /></svg>
            <span className="absolute bottom-0 h-[3px] w-4 rounded-full bg-[#1b6fb5]" />
          </button>
        </div>
      </div>
      <div className="flex items-center justify-end pr-[19px]">
        <button aria-label="显示隐藏的图标"><ChevronUp size={16} strokeWidth={2} /></button>
        <Cloud size={18} strokeWidth={1.600} fill="#cfcfcf" className="ml-[15px]" />
        <button className="ml-[15px] text-base leading-5">英</button>
        <button className="ml-[22px] text-base leading-5">五</button>
        <button aria-label="网络和音量" className="ml-[21px] flex items-center gap-2">
          <Wifi size={17} strokeWidth={1.800} />
          <svg width="17" height="14" viewBox="0 0 17 14" fill="none" stroke="currentColor" strokeWidth="1.100" aria-hidden="true"><path d="M1 5h2.500L7 1.500v11L3.500 9H1zM10.500 5l4 4M14.500 5l-4 4" /></svg>
          <svg width="17" height="14" viewBox="0 0 17 14" fill="none" stroke="currentColor" strokeWidth="1.200" aria-hidden="true"><rect x="2" y="3" width="12.500" height="9" rx="1.500" /><path d="M4 5h8.500v5H4z" fill="#222" /><path d="M16 6v3M3.500 0v6M1 1v3h5" /></svg>
        </button>
        <div className="ml-[14px] w-[62px] text-right text-xs leading-4"><div>11:28</div><div>2025/10/29</div></div>
      </div>
    </div>
  );
}

export default function App() {
  return (
    <div className={`flex h-screen flex-col overflow-hidden bg-[#e1e1e1] ${UI} [&_button]:whitespace-nowrap`}>
      <TitleBar />
      <MenuRow />
      <Ribbon />
      <div className="flex min-h-0 flex-1">
        <main className="flex min-w-0 flex-1 flex-col">
          <Ruler />
          <div className="flex min-h-0 flex-1">
            <div className="w-6 shrink-0 bg-[#d8d8d8]" />
            <div className="flex flex-1 justify-center overflow-hidden bg-[#e1e1e1] pt-[25px] pl-0.5"><Document /></div>
          </div>
        </main>
        <ScrollBar />
        <StylePanel />
        <SideBar />
      </div>
      <StatusBar />
      <TaskBar />
    </div>
  );
}
